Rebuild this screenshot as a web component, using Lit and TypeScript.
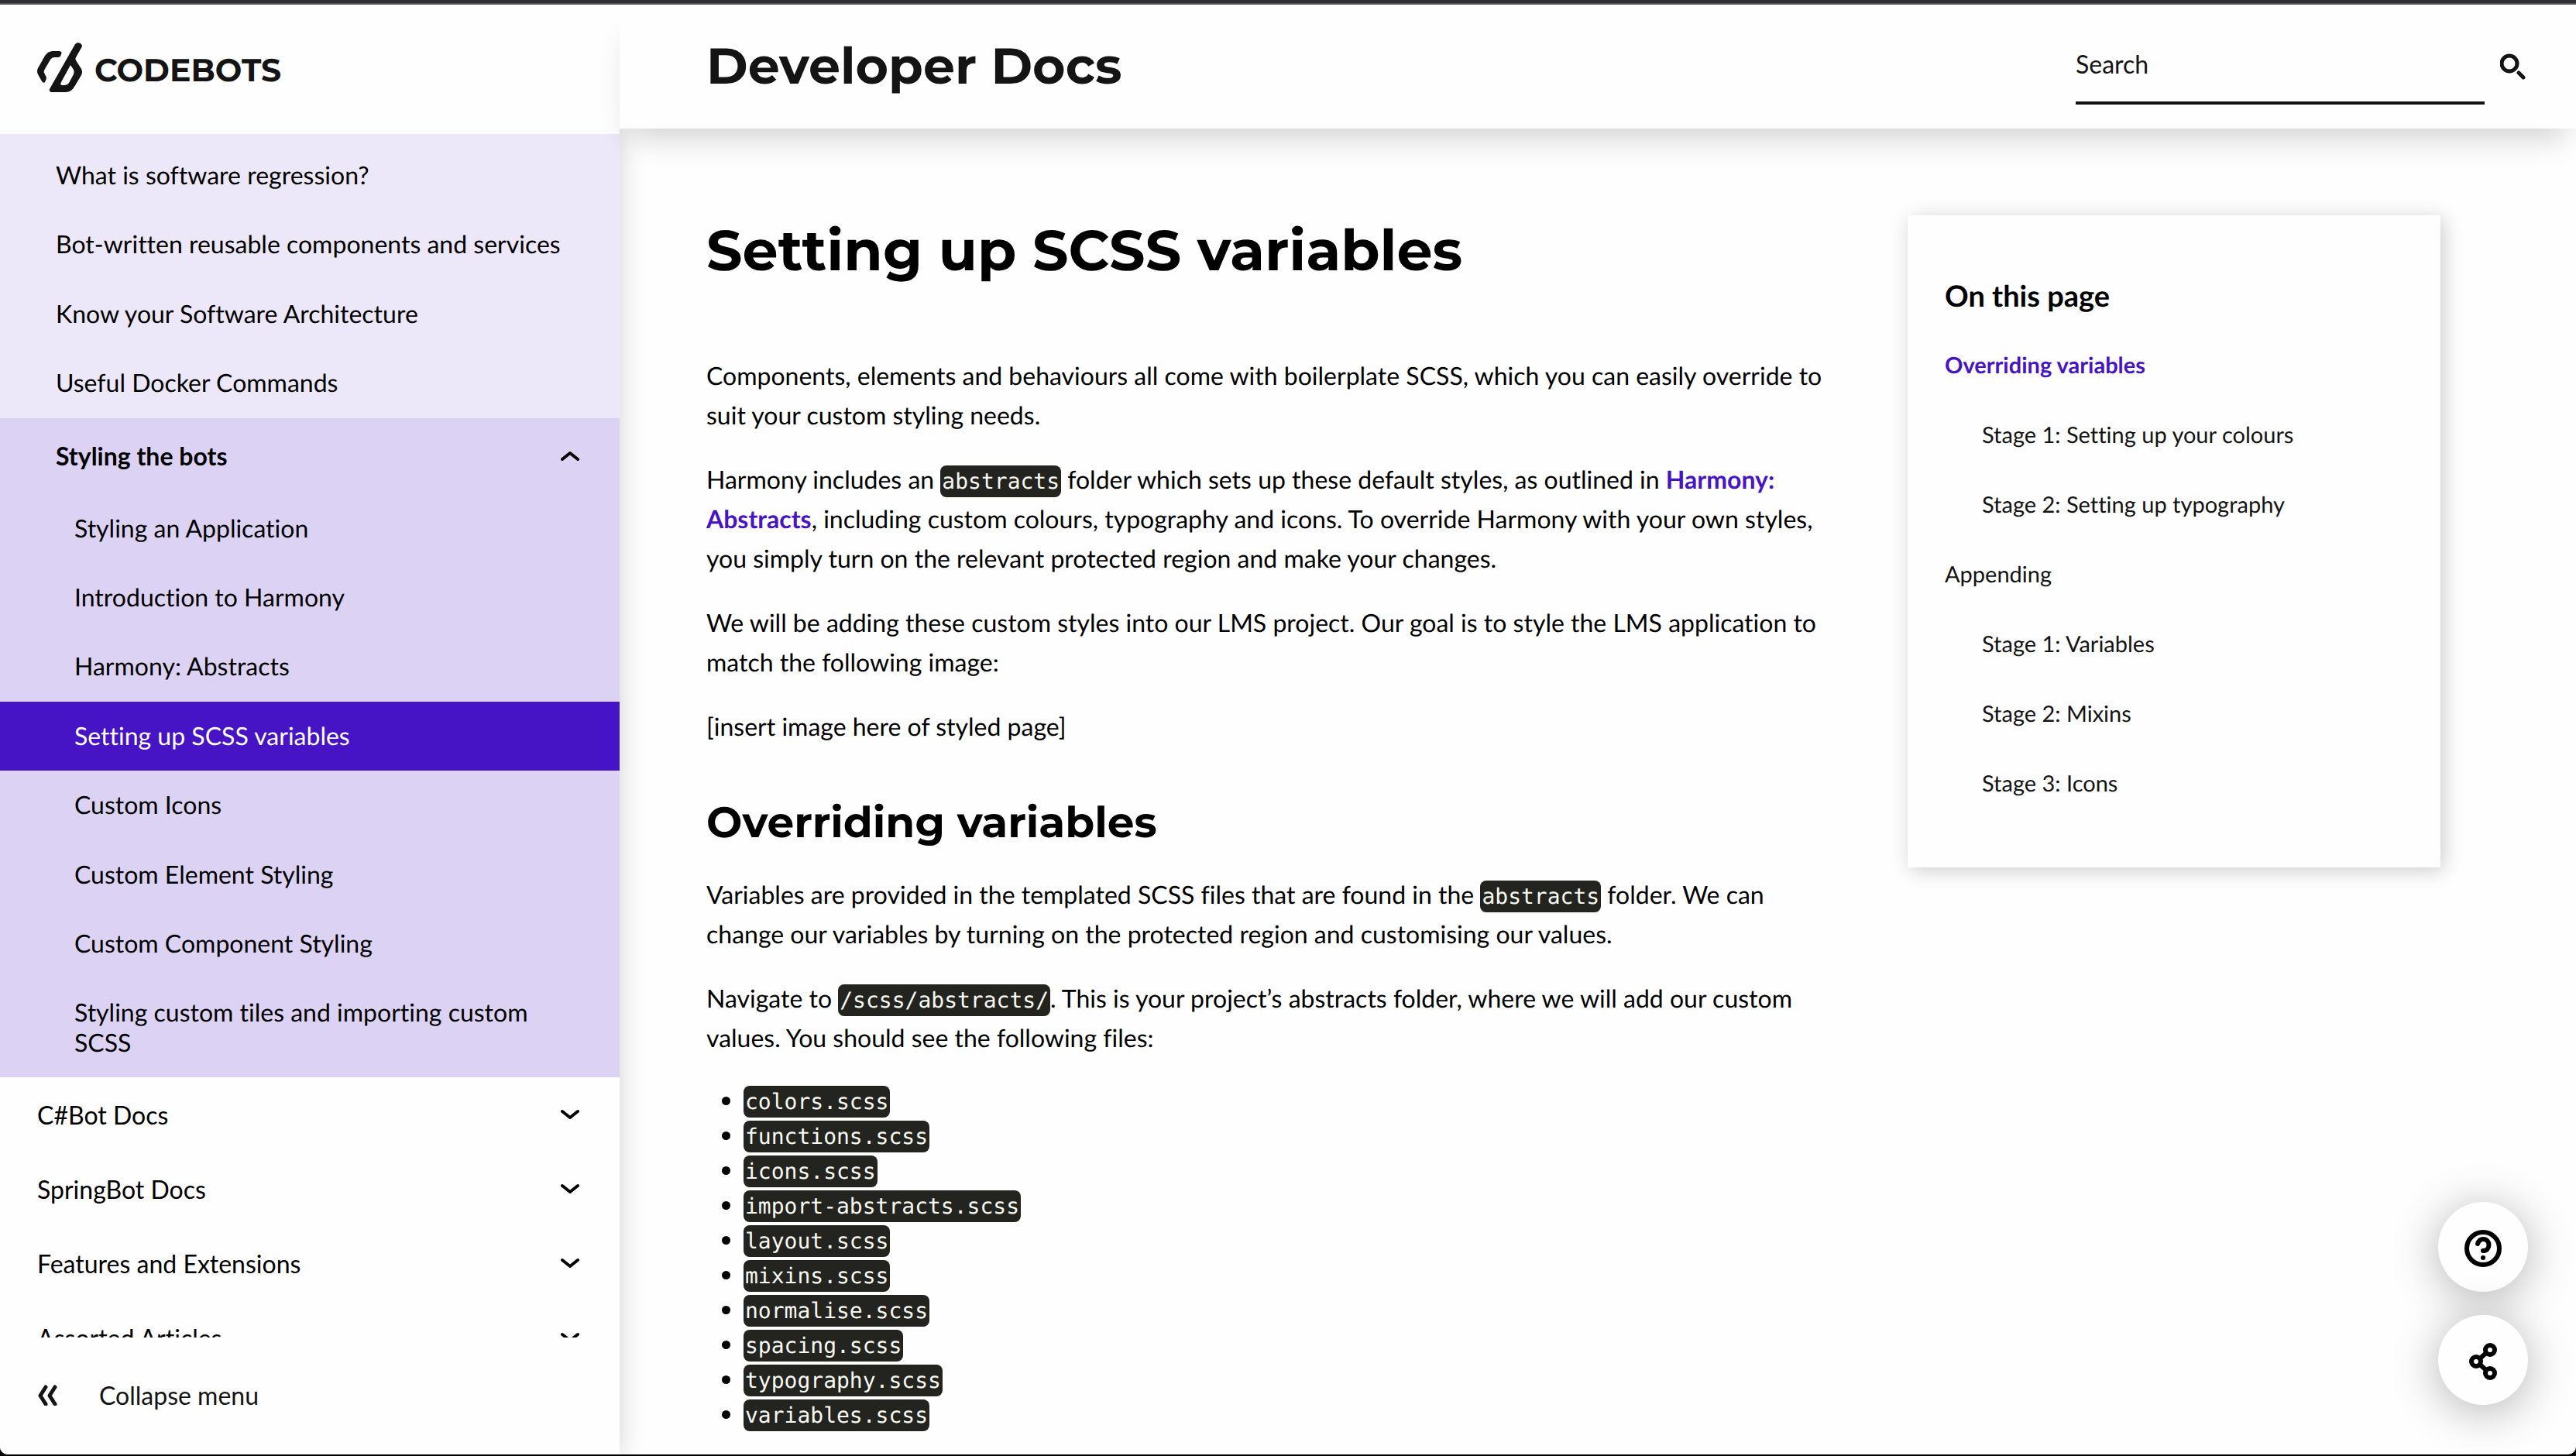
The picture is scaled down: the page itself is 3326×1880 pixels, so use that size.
import { LitElement, html, css, svg } from "lit";
import { customElement } from "lit/decorators.js";
import { classMap } from "lit/directives/class-map.js";

const chevronDown = html`<svg class="chevron" width="26" height="16" viewBox="0 0 26 16" aria-hidden="true">${svg`<path d="M2 4 L12 12 L22 4" />`}</svg>`;
const chevronUp = html`<svg class="chevron" width="26" height="16" viewBox="0 0 26 16" aria-hidden="true">${svg`<path d="M2 12 L12 4 L22 12" />`}</svg>`;

const articles = [
  "What is software regression?",
  "Bot-written reusable components and services",
  "Know your Software Architecture",
  "Useful Docker Commands",
];
const styling = [
  "Styling an Application",
  "Introduction to Harmony",
  "Harmony: Abstracts",
  "Setting up SCSS variables",
  "Custom Icons",
  "Custom Element Styling",
  "Custom Component Styling",
  "Styling custom tiles and importing custom SCSS",
];
const sections = ["C#Bot Docs", "SpringBot Docs", "Features and Extensions", "Assorted Articles"];
const toc = [
  { text: "Overriding variables", sub: false, active: true },
  { text: "Stage 1: Setting up your colours", sub: true, active: false },
  { text: "Stage 2: Setting up typography", sub: true, active: false },
  { text: "Appending", sub: false, active: false },
  { text: "Stage 1: Variables", sub: true, active: false },
  { text: "Stage 2: Mixins", sub: true, active: false },
  { text: "Stage 3: Icons", sub: true, active: false },
];
const files = [
  "colors", "functions", "icons", "import-abstracts", "layout",
  "mixins", "normalise", "spacing", "typography", "variables",
];

@customElement("app-root")
export class AppRoot extends LitElement {
  static styles = css`
    :host {
      display: block;
      font-family: Lato, "Liberation Sans", sans-serif;
      font-size: 32px;
      font-variant-ligatures: none;
      text-rendering: geometricPrecision;
      color: #000;
    }
    * { box-sizing: border-box; }
    a { color: inherit; text-decoration: none; }
    button {
      font: inherit;
      font-variant-ligatures: none;
      color: inherit;
      background: none;
      border: 0;
      padding: 0;
      text-align: left;
      cursor: pointer;
    }
    ul { list-style: none; margin: 0; padding: 0; }
    .window {
      display: flex;
      height: 100vh;
      background: #000;
      border-top: 4px solid #2f2e34;
      padding-bottom: 2px;
      overflow: hidden;
    }
    .page {
      flex: 1;
      display: grid;
      grid-template-columns: 800px minmax(0, 1fr);
      background: #fefefe;
      border-top: 2px solid #56555b;
      border-radius: 0 0 10px 10px;
      overflow: hidden;
    }
    .sidebar {
      position: relative;
      z-index: 1;
      display: flex;
      flex-direction: column;
      min-height: 0;
      background: #fefefe;
      box-shadow: 0 0 32px rgba(0, 0, 0, 0.18);
    }
    .brand {
      display: flex;
      align-items: center;
      gap: 16px;
      height: 167px;
      padding: 2px 48px 0;
      flex: none;
      color: #141414;
      font: 700 41px/48px Montserrat, Lato, sans-serif;
    }
    .brand svg { margin-bottom: 8px; }
    .menu { flex: 1; min-height: 0; overflow: hidden; }
    .articles { background: #ece8f9; padding-top: 9px; }
    .articles a { display: block; padding: 25px 72px 26px; line-height: 1.2; }
    .group { background: #dcd3f4; }
    .head {
      display: flex;
      align-items: center;
      justify-content: space-between;
      width: 100%;
      padding: 0 50px 0 72px;
      height: 98px;
      font-weight: 700;
    }
    .group a { display: block; padding: 25px 96px 26px; line-height: 1.2; }
    .group a.active { background: #4614c4; color: #fff; }
    .sections .head { padding-left: 48px; height: 96px; font-weight: 400; }
    .chevron, .line-icon {
      fill: none;
      stroke: currentColor;
      stroke-width: 5;
      stroke-linecap: round;
      stroke-linejoin: round;
      display: block;
      flex: none;
    }
    .chevron { stroke-width: 4; }
    .collapse {
      display: flex;
      align-items: center;
      gap: 52px;
      height: 151px;
      padding: 0 48px 3px;
      flex: none;
      color: #141414;
    }
    .content {
      display: flex;
      flex-direction: column;
      min-width: 0;
      min-height: 0;
    }
    .topbar {
      position: relative;
      z-index: 2;
      display: flex;
      align-items: center;
      justify-content: space-between;
      height: 160px;
      flex: none;
      padding: 0 64px 0 112px;
      background: #fefefe;
      color: #141414;
      box-shadow: 0 26px 36px -14px rgba(0, 0, 0, 0.18);
    }
    .title { font: 700 65px/80px Montserrat, Lato, sans-serif; }
    .search { display: flex; align-items: center; gap: 20px; }
    .search input {
      width: 528px;
      height: 98px;
      padding: 0 0 4px;
      border: 0;
      border-bottom: 4px solid #141414;
      background: none;
      font: inherit;
      color: #141414;
      outline: 0;
    }
    .search input::placeholder { color: #141414; opacity: 1; }
    .columns {
      display: flex;
      align-items: flex-start;
      justify-content: space-between;
      padding: 112px 175px 0 112px;
      min-height: 0;
    }
    article { width: 1456px; line-height: 51px; }
    h1, h2, h3, p { margin: 0; }
    h1 { font: 700 73px/92px Montserrat, Lato, sans-serif; margin-bottom: 89px; }
    h2 { font: 700 55px/72px Montserrat, Lato, sans-serif; margin: 63px 0 31px; }
    p + p { margin-top: 32px; }
    p a { color: #4614c4; font-weight: 700; }
    code {
      font-family: "DejaVu Sans Mono", monospace;
      font-size: 28px;
      line-height: 1;
      color: #f8f8f2;
      background: #23241f;
      border-radius: 8px;
      padding: 4px 2px;
    }
    .files { list-style: disc; padding-left: 48px; margin-top: 32px; line-height: 45px; }
    .toc {
      width: 688px;
      padding: 78px 48px 91px;
      background: #fefefe;
      box-shadow: 4px 4px 24px rgba(0, 0, 0, 0.2);
    }
    h3 { font-size: 38px; line-height: 52px; margin-bottom: 47px; }
    .toc a { display: block; font-size: 29px; line-height: 34px; color: #141414; }
    .toc li + li { margin-top: 56px; }
    .toc .sub { padding-left: 48px; }
    .toc a.active { color: #4614c4; font-weight: 700; }
    .floating {
      position: absolute;
      right: 62px;
      bottom: 66px;
      z-index: 3;
      display: grid;
      gap: 30px;
    }
    .floating button {
      display: grid;
      place-items: center;
      width: 116px;
      height: 116px;
      padding-top: 4px;
      border-radius: 50%;
      background: #fefefe;
      box-shadow: 0 8px 60px rgba(0, 0, 0, 0.3);
    }
  `;

  render() {
    return html`
      <div class="window">
        <div class="page">
          <nav class="sidebar" aria-label="Documentation">
            <a class="brand" href="#">
              <svg width="58" height="64" viewBox="0 0 58 64" fill="currentColor" aria-hidden="true">
                <path d="M20 11 H29 Q33 12 31 15 Q30 19 27 19 H22 Q19 19 17 22 L10 34 Q8 37 9 39 L12 45 Q12 47 10 51 Q8 53 6 50 L1 41 Q-1 37 1 33 L10 17 Q14 11 20 11 Z" />
                <path fill-rule="evenodd" d="M49 2 Q51 0 53 0 Q58 1 58 5 L50 19 Q49 21 50 23 L57 34 Q59 38 57 42 L48 57 Q44 64 37 64 H18 Q15 63 16 60 Z M43 29 L31 51 Q29 55 32 55 H35 Q39 55 41 52 L47 41 Q48 38 47 35 Z" />
              </svg>
              <span>CODEBOTS</span>
            </a>
            <div class="menu">
              <ul class="articles">${articles.map((t) => html`<li><a href="#">${t}</a></li>`)}</ul>
              <div class="group">
                <button class="head" aria-expanded="true">Styling the bots ${chevronUp}</button>
                <ul>
                  ${styling.map((t, i) => html`<li><a href="#" class=${classMap({ active: i === 3 })}>${t}</a></li>`)}
                </ul>
              </div>
              <div class="sections">
                ${sections.map((t) => html`<button class="head" aria-expanded="false">${t} ${chevronDown}</button>`)}
              </div>
            </div>
            <button class="collapse">
              <svg class="line-icon" width="28" height="28" viewBox="0 0 28 28" aria-hidden="true">
                <path d="M11 4 L4 15 L11 26 M23 4 L16 15 L23 26" />
              </svg>
              Collapse menu
            </button>
          </nav>
          <div class="content">
            <header class="topbar">
              <a class="title" href="#">Developer Docs</a>
              <form class="search">
                <input type="text" placeholder="Search" aria-label="Search" />
                <button type="button" aria-label="Submit search">
                  <svg class="line-icon" width="34" height="34" viewBox="0 0 34 34" aria-hidden="true">
                    <circle cx="12" cy="13" r="10" /><path d="M24 25 L30 31" />
                  </svg>
                </button>
              </form>
            </header>
            <main class="columns">
              <article>
                <h1>Setting up SCSS variables</h1>
                <p>Components, elements and behaviours all come with boilerplate SCSS, which you can easily override to suit your custom styling needs.</p>
                <p>Harmony includes an <code>abstracts</code> folder which sets up these default styles, as outlined in <a href="#">Harmony: Abstracts</a>, including custom colours, typography and icons. To override Harmony with your own styles, you simply turn on the relevant protected region and make your changes.</p>
                <p>We will be adding these custom styles into our LMS project. Our goal is to style the LMS application to match the following image:</p>
                <p>[insert image here of styled page]</p>
                <h2>Overriding variables</h2>
                <p>Variables are provided in the templated SCSS files that are found in the <code>abstracts</code> folder. We can change our variables by turning on the protected region and customising our values.</p>
                <p>Navigate to <code>/scss/abstracts/</code>. This is your project’s abstracts folder, where we will add our custom values. You should see the following files:</p>
                <ul class="files">${files.map((f) => html`<li><code>${f}.scss</code></li>`)}</ul>
              </article>
              <aside class="toc">
                <h3>On this page</h3>
                <ul>
                  ${toc.map((t) => html`<li><a href="#" class=${classMap({ sub: t.sub, active: t.active })}>${t.text}</a></li>`)}
                </ul>
              </aside>
            </main>
          </div>
        </div>
        <div class="floating">
          <button aria-label="Help">
            <svg width="50" height="50" viewBox="0 0 50 50" fill="none" stroke="#000" stroke-width="6" stroke-linecap="round" aria-hidden="true">
              <circle cx="25" cy="25" r="21" />
              <path d="M18 19 Q20 13 25 13 C35 13 35 28 25 28" />
              <circle cx="25" cy="37" r="3" fill="#000" stroke="none" />
            </svg>
          </button>
          <button aria-label="Share">
            <svg width="38" height="50" viewBox="0 0 38 50" fill="none" stroke="#000" stroke-width="6" aria-hidden="true">
              <circle cx="10" cy="25" r="6" /><circle cx="28" cy="10" r="6" /><circle cx="28" cy="40" r="6" />
              <path d="M15 21 L23 14 M15 29 L23 36" />
            </svg>
          </button>
        </div>
      </div>
    `;
  }
}
